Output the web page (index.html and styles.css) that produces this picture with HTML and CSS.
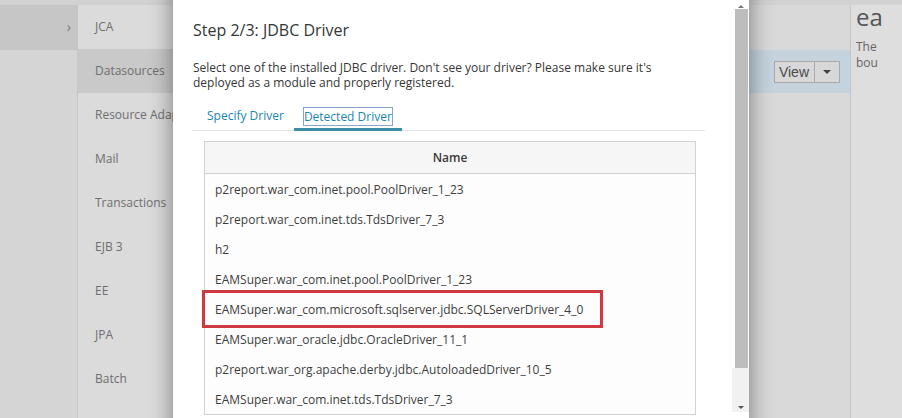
FILE: index.html
```html
<!DOCTYPE html>
<html lang="en">
<head>
  <meta charset="UTF-8" />
  <title>Add Datasource</title>
  <link rel="stylesheet" href="styles.css">
</head>
<body>
  <div class="page">
    <div class="sidebar">
      <div class="side-item selected"><span class="chev">&#8250;</span></div>
    </div>
    <ul class="subnav">
      <li>JCA</li>
      <li class="active">Datasources</li>
      <li>Resource Adapters</li>
      <li>Mail</li>
      <li>Transactions</li>
      <li>EJB 3</li>
      <li>EE</li>
      <li>JPA</li>
      <li>Batch</li>
    </ul>
    <div class="list">
      <div class="list-row"></div>
      <div class="list-row selected">
        <div class="split-btn">
          <span class="btn-main">View</span>
          <span class="btn-caret"></span>
        </div>
      </div>
    </div>
    <div class="detail">
      <h2>ea</h2>
      <p>The<br>bou</p>
    </div>
  </div>

  <div class="modal">
    <div class="modal-body">
      <h3 class="step-title">Step 2/3: JDBC Driver</h3>
      <p class="step-desc">Select one of the installed JDBC driver. Don't see your driver? Please make sure it's deployed as a module and properly registered.</p>

      <div class="tabs">
        <a class="tab">Specify Driver</a>
        <a class="tab active"><span class="focus">Detected Driver</span></a>
      </div>

      <div class="tab-pane">
        <table class="drivers">
          <thead>
            <tr><th>Name</th></tr>
          </thead>
          <tbody>
            <tr><td>p2report.war_com.inet.pool.PoolDriver_1_23</td></tr>
            <tr><td>p2report.war_com.inet.tds.TdsDriver_7_3</td></tr>
            <tr><td>h2</td></tr>
            <tr><td>EAMSuper.war_com.inet.pool.PoolDriver_1_23</td></tr>
            <tr><td class="marked">EAMSuper.war_com.microsoft.sqlserver.jdbc.SQLServerDriver_4_0<span class="mark"></span></td></tr>
            <tr><td>EAMSuper.war_oracle.jdbc.OracleDriver_11_1</td></tr>
            <tr><td>p2report.war_org.apache.derby.jdbc.AutoloadedDriver_10_5</td></tr>
            <tr><td>EAMSuper.war_com.inet.tds.TdsDriver_7_3</td></tr>
          </tbody>
        </table>
      </div>
    </div>
    <div class="scrollbar">
      <span class="arrow up"></span>
      <span class="thumb"></span>
      <span class="arrow down"></span>
    </div>
  </div>
</body>
</html>
```

FILE: styles.css
```css
body {
  margin: 0;
  font-family: "Open Sans", Arial, sans-serif;
  background-color: #dadada;
  width: 902px;
  height: 418px;
  overflow: hidden;
  position: relative;
}
.page {
  display: flex;
  height: 418px;
  border-top: 5px solid #d2d2d2;
  box-sizing: border-box;
}
.sidebar {
  width: 77px;
  background-color: #d5d5d5;
  border-right: 1px solid #c6c6c6;
}
.side-item {
  height: 45px;
  display: flex;
  align-items: center;
  justify-content: flex-end;
  padding-right: 6px;
}
.side-item.selected {
  background-color: #c6c6c6;
}
.chev {
  color: #7a7a7a;
  font-size: 14px;
  margin-top: -3px;
}
.subnav {
  list-style: none;
  margin: 0;
  padding: 0;
  width: 200px;
  background-color: #dbdbdb;
}
.subnav li {
  height: 44px;
  line-height: 44px;
  padding-left: 17px;
  font-size: 12px;
  color: #6e6e6e;
  white-space: nowrap;
}
.subnav li.active {
  background-color: #c9c9c9;
}
.list {
  flex: 1;
  background-color: #d9d9d9;
  border-right: 1px solid #c4c4c4;
}
.list-row {
  height: 45px;
}
.list-row.selected {
  height: 43px;
  background-color: #c4d3dd;
  display: flex;
  align-items: center;
  justify-content: flex-end;
  padding-right: 10px;
}
.split-btn {
  display: flex;
  border: 1px solid #a9a9a9;
  background-color: #d8d8d8;
  height: 20px;
}
.btn-main {
  font-family: "Liberation Sans", Arial, sans-serif;
  font-size: 14px;
  color: #4a4a4a;
  padding: 0 5px 0 4px;
  line-height: 20px;
  border-right: 1px solid #a9a9a9;
}
.btn-caret {
  width: 24px;
  display: flex;
  align-items: center;
  justify-content: center;
}
.btn-caret::after {
  content: "";
  border-left: 4px solid transparent;
  border-right: 4px solid transparent;
  border-top: 4px solid #444;
}
.detail {
  width: 46px;
  padding-left: 5px;
  background-color: #dedede;
  overflow: hidden;
  white-space: nowrap;
}
.detail h2 {
  margin: 0;
  font-weight: normal;
  font-size: 24px;
  line-height: 24px;
  color: #555;
}
.detail p {
  margin: 10px 0 0;
  font-size: 12px;
  line-height: 16px;
  color: #666;
}

/* modal over the greyed page */
.modal {
  position: absolute;
  left: 173px;
  top: -20px;
  width: 576px;
  height: 460px;
  background-color: #fff;
  box-shadow: 0 0 22px rgba(0, 0, 0, 0.45);
  display: flex;
}
.modal-body {
  width: 533px;
  padding: 0 0 0 20px;
}
.step-title {
  margin: 39px 0 0;
  font-size: 16px;
  font-weight: normal;
  color: #363636;
  line-height: 22px;
}
.step-desc {
  margin: 19px 0 0;
  font-size: 12px;
  line-height: 15px;
  color: #363636;
  width: 470px;
}
.tabs {
  display: flex;
  margin: 9px 0 0 -1px;
  border-bottom: 1px solid #e6e6e6;
  width: 513px;
}
.tab {
  font-size: 12px;
  color: #1a86b0;
  padding: 9px 10px 6px 15px;
  line-height: 16px;
}
.tab.active {
  padding: 8px 9px 2px;
  margin-bottom: -1px;
  border-bottom: 3px solid #3b8ea5;
}
.focus {
  display: inline-block;
  border: 1px solid #8aa3cc;
  line-height: 17px;
}
.tab-pane {
  padding: 10px 10px 0 11px;
}
.drivers {
  width: 492px;
  border-collapse: collapse;
  border: 1px solid #d2d2d2;
}
.drivers th {
  height: 31px;
  padding: 0;
  background-color: #f6f6f6;
  font-size: 12px;
  font-weight: 600;
  color: #3a3a3a;
  border-bottom: 1px solid #d2d2d2;
}
.drivers td {
  height: 30px;
  padding: 0 10px;
  font-size: 12px;
  color: #3d3d3d;
  background-color: #fdfdfd;
}
.marked {
  position: relative;
}
.mark {
  position: absolute;
  left: -3px;
  top: -4px;
  width: 395px;
  height: 32px;
  border: 3px solid #d0393f;
}
.scrollbar {
  width: 17px;
  margin-left: 14px;
  display: flex;
  flex-direction: column;
  align-items: center;
  background-color: #fff;
}
.thumb {
  width: 13px;
  margin-left: 2px;
  height: 359px;
  background-color: #bdbdbd;
}
.arrow {
  width: 17px;
  display: flex;
  justify-content: center;
}
.arrow.up {
  height: 29px;
  align-items: flex-end;
  padding-bottom: 1px;
  box-sizing: border-box;
}
.arrow.up::after {
  content: "";
  border-left: 3px solid transparent;
  border-right: 3px solid transparent;
  border-bottom: 3px solid #777;
}
.arrow.down {
  height: 44px;
  background-color: #f1f1f1;
  align-items: flex-start;
  padding-top: 38px;
  box-sizing: border-box;
}
.arrow.down::after {
  content: "";
  border-left: 3px solid transparent;
  border-right: 3px solid transparent;
  border-top: 3px solid #555;
}
```
